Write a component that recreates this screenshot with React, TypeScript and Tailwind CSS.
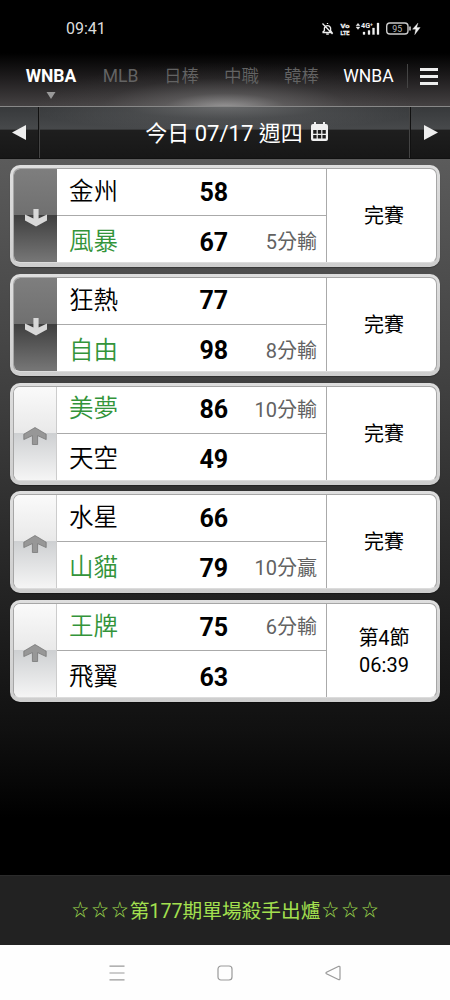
import React from "react";

type Side = { name: string; score: number; note?: string };
type Game = { away: Side; home: Side; dir: "up" | "down"; status: string[] };

const games: Game[] = [
  { dir: "down", away: { name: "金州", score: 58 }, home: { name: "風暴", score: 67, note: "5分輸" }, status: ["完賽"] },
  { dir: "down", away: { name: "狂熱", score: 77 }, home: { name: "自由", score: 98, note: "8分輸" }, status: ["完賽"] },
  { dir: "up", away: { name: "美夢", score: 86, note: "10分輸" }, home: { name: "天空", score: 49 }, status: ["完賽"] },
  { dir: "up", away: { name: "水星", score: 66 }, home: { name: "山貓", score: 79, note: "10分贏" }, status: ["完賽"] },
  { dir: "up", away: { name: "王牌", score: 75, note: "6分輸" }, home: { name: "飛翼", score: 63 }, status: ["第4節", "06:39"] },
];

function StatusIcons() {
  return (
    <svg className="ml-[216px] h-5 w-[104px]" viewBox="0 0 104 20" fill="none" stroke="#eee">
      <path d="M2.5 13.5h9.5L10.6 11.5V9a3.2 3.2 0 0 0-6.2 0v2.5L2.5 13.5M6.2 15.2h2.6M7.5 5V4M2.5 4.5l10 10.5" strokeWidth="1.3" />
      <g fill="#f0f0f0" stroke="#f0f0f0" strokeWidth=".3" className="font-['Roboto'] font-bold">
        <text x="20.5" y="8.6" fontSize="6.2" textLength="9" lengthAdjust="spacingAndGlyphs">Vo</text>
        <text x="20.5" y="16.1" fontSize="6.2" textLength="9" lengthAdjust="spacingAndGlyphs">LTE</text>
        <text x="41" y="9" fontSize="7.5" strokeWidth="0" textLength="12" lengthAdjust="spacingAndGlyphs">4G⁺</text>
        <path d="M36 6.8l2-2.5 2 2.5zM36 8l2 2.5 2-2.5zM43 13h2v2.5h-2zM48 11.5h2v4h-2zM52.5 9h2v6.5h-2zM57 4h2v11.5h-2z" />
        <path d="M98 4l-5.5 6.2h3.2l-1 5.5 5.5-7.2h-3.5z" />
      </g>
      <rect x="66.7" y="4" width="21.3" height="11" rx="3.2" strokeWidth="1.4" stroke="#ccc" />
      <path d="M90 7.5v4" stroke="#ddd" strokeWidth="1.5" />
      <text x="72.3" y="12.6" fontSize="8.8" fill="#bbb" stroke="none" className="font-['Roboto']">95</text>
    </svg>
  );
}

function Arrow({ dir }: { dir: "up" | "down" }) {
  return dir === "down" ? (
    <svg className="mt-[5px] h-[18px] w-6" viewBox="0 0 24 18">
      <path d="M9.4 0h5.2v9.6L23 5.6v5.8L12 17.5 1 11.4V5.6l8.4 4z" fill="#d8d8d8" />
    </svg>
  ) : (
    <svg className="mt-[5px] h-[18px] w-6" viewBox="0 0 24 18">
      <path d="M9.4 17.5h5.2V8.6l8.6 4V7.2L12 .5.8 7.2v5.4l8.6-4z" fill="#979797" stroke="#707070" strokeWidth=".7" />
    </svg>
  );
}

function TeamRow({ side }: { side: Side }) {
  return (
    <div className="flex h-[46px] items-center pl-3 pr-[9px]">
      <span className={side.note ? "w-[130.4px] text-[24.5px] font-[350] text-[#33943a]" : "w-[130.4px] text-[24.5px] font-[350] text-black"}>{side.name}</span>
      <span className="text-[25px] font-bold text-black">{side.score}</span>
      {side.note && <span className="ml-auto text-[20px] text-[#626262]">{side.note}</span>}
    </div>
  );
}

function GameCard({ game }: { game: Game }) {
  return (
    <div className="h-[102px] rounded-[10px] bg-linear-to-b from-[#dedede] to-[#cecece] pr-[3px] pl-[3px] pt-[3px] pb-[4px] shadow-[0_1px_1px_rgba(0,0,0,0.3)]">
      <div className="flex h-full overflow-hidden rounded-[7px] border border-[#a6a6a6] border-b-[#dcdcdc] bg-white leading-none">
        <div
          className={
            game.dir === "down"
              ? "flex w-[43px] items-center justify-center bg-[linear-gradient(#7e7e7e_0%,#707070_49%,#3f3f3f_50%,#777_100%)]"
              : "flex w-[43px] items-center justify-center border-r border-[#ccc] bg-[linear-gradient(#fafafa_0%,#e9e9e9_49%,#ced0d2_50%,#f5f5f5_100%)]"
          }
        >
          <Arrow dir={game.dir} />
        </div>
        <div className="w-[269px]">
          <TeamRow side={game.away} />
          <div className="h-px bg-[#aaa]" />
          <div className="pt-[3px]">
            <TeamRow side={game.home} />
          </div>
        </div>
        <div className="flex flex-1 flex-col items-center justify-center border-l border-[#aaa] pl-[5px] pt-[2px] text-[20px] leading-[27px] text-black">
          {game.status.map((s) => (
            <span key={s}>{s}</span>
          ))}
        </div>
      </div>
    </div>
  );
}

function Stars() {
  return (
    <span className="flex">
      {[0, 1, 2].map((i) => (
        <span key={i} className="w-[19.8px] text-center text-[16.5px] font-[350]">☆</span>
      ))}
    </span>
  );
}

export default function App() {
  return (
    <div className="flex h-[1000px] w-[450px] flex-col overflow-hidden bg-black font-['Roboto','Noto_Sans_CJK_TC',sans-serif] text-white">
      <header className="h-[106px] bg-[radial-gradient(ellipse_190px_46px_at_225px_108px,rgba(215,215,215,0.58),rgba(170,170,170,0.26)_32%,rgba(140,140,140,0.07)_65%,transparent),linear-gradient(#000_50%,#1d1b1c_72%,#444142_100%)]">
        <div className="flex h-[58px] items-center pl-[66px]">
          <span className="w-[38px] text-[16px] text-[#ddd]">09:41</span>
          <StatusIcons />
        </div>
        <nav className="flex h-9 items-center pl-4 text-[17.5px] leading-none text-[#636363]">
          <span className="w-[70px] pt-[2px] text-center text-[17.5px] font-bold text-white">WNBA</span>
          <span className="w-[69px] pt-[2px] text-center">MLB</span>
          <span className="w-[53px] pt-[2px] text-center font-[350]">日棒</span>
          <span className="w-[67px] pt-[2px] text-center font-[350]">中職</span>
          <span className="w-[53px] pt-[2px] text-center font-[350]">韓棒</span>
          <span className="w-[79px] pt-[2px] pl-[2px] text-center text-[17.5px] text-white">WNBA</span>
          <span className="h-6 w-px bg-[#444]" />
          <div className="ml-[12px] flex w-[18px] flex-col gap-[4px]">
            <i className="h-[3px] bg-[#eee]" />
            <i className="h-[3px] bg-[#eee]" />
            <i className="h-[3px] bg-[#eee]" />
          </div>
        </nav>
        <svg className="-mt-[2px] ml-[46px] h-[7px] w-[10px]" viewBox="0 0 10 7">
          <path d="M.5 0h9L5 7z" fill="#999" />
        </svg>
      </header>

      <div className="flex h-[53px] shrink-0 border-t border-b border-t-[#888] border-b-[#111] bg-[radial-gradient(ellipse_200px_24px_at_225px_0px,rgba(190,190,190,0.36),rgba(170,170,170,0.12)_50%,transparent),linear-gradient(#37393b_0%,#47494b_43%,#1e1e1e_46%,#171717_100%)]">
        <div className="flex w-[39px] items-center justify-center border-r border-[#111] shadow-[1px_0_0_#444]">
          <svg className="h-[15px] w-[14px]" viewBox="0 0 14 15"><path d="M0 7.5L14 0v15z" fill="#eee" /></svg>
        </div>
        <div className="flex flex-1 items-center justify-center pl-[24px] pt-[2px] text-[22px] leading-none">
          <span>今日 07/17 週四</span>
          <svg className="mb-[4px] ml-[8px] h-[19px] w-[17px]" viewBox="0 0 17 19">
            <path fill="#f0f0f0" fillRule="evenodd" d="M3 0h2v2h7V0h2v2h1a2 2 0 0 1 2 2v13a2 2 0 0 1-2 2H2a2 2 0 0 1-2-2V4a2 2 0 0 1 2-2h1zM2.2 8v3.8h3.4V8zm4.6 0v3.8h3.4V8zm4.6 0v3.8h3.4V8zM2.2 13v3.6h3.4V13zm4.6 0v3.6h3.4V13zm4.6 0v3.6h3.4V13z" />
          </svg>
        </div>
        <div className="flex w-[40px] items-center justify-center border-l border-[#111] shadow-[-1px_0_0_#444]">
          <svg className="h-[15px] w-[14px]" viewBox="0 0 14 15"><path d="M14 7.5L0 0v15z" fill="#eee" /></svg>
        </div>
      </div>

      <main className="flex flex-1 flex-col gap-[6.75px] bg-[linear-gradient(#5b5b5b_0%,#424242_30%,#212121_63%,#101010_80%,#000_92%)] px-[10px] pt-[6px]">
        {games.map((g) => (
          <GameCard key={g.away.name} game={g} />
        ))}
      </main>

      <div className="flex h-[70px] shrink-0 items-center justify-center border-t border-[#2b2b2b] bg-[#222] pt-[2px] text-[19.7px] text-[#a3e04f]">
        <Stars />
        <span>第177期單場殺手出爐</span>
        <Stars />
      </div>

      <div className="flex h-[55px] shrink-0 items-center justify-between bg-[#fefefe] px-[109px]">
        <svg className="h-4 w-4" viewBox="0 0 16 16" stroke="#999" strokeWidth="1.2"><path d="M.5 1.2h15M.5 8h15M.5 14.8h15" /></svg>
        <svg className="h-4 w-4" viewBox="0 0 16 16" fill="none" stroke="#999" strokeWidth="1.2"><rect x="1" y="1" width="14" height="14" rx="3" /></svg>
        <svg className="h-4 w-4" viewBox="0 0 16 16" fill="none" stroke="#999" strokeWidth="1.2"><path d="M13.8 1.3L1.5 7.2q-1 .8 0 1.6l12.3 5.9q1.2.2 1.2-1.2v-11q0-1.4-1.2-1.2z" /></svg>
      </div>
    </div>
  );
}
